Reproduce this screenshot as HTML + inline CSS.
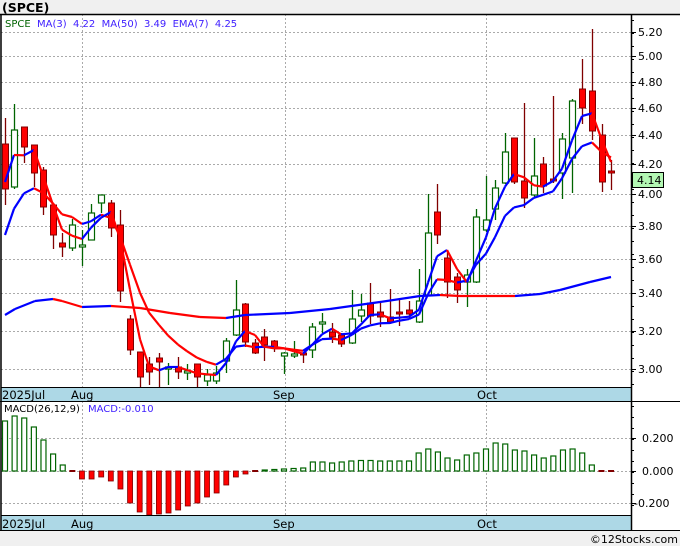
<!DOCTYPE html>
<html><head><meta charset="utf-8"><style>
html,body{margin:0;padding:0;background:#f0f0f0;}
body{width:680px;height:546px;overflow:hidden;position:relative;font-family:"DejaVu Sans","Liberation Sans",sans-serif;}
svg{position:absolute;left:0;top:0;}
</style></head><body>
<svg id="s" width="680" height="546" xmlns="http://www.w3.org/2000/svg" font-family="DejaVu Sans, Liberation Sans, sans-serif">
<rect x="0" y="0" width="680" height="546" fill="#f0f0f0"/>
<text x="2" y="12" font-size="12.5" font-weight="bold" fill="#000">(SPCE)</text>
<rect x="1" y="14" width="679" height="516" fill="#fff"/>
<g id="g"></g>
</svg>
<script>
var g=document.getElementById('g');var h='';
function L(x1,y1,x2,y2,c,w,d){h+='<line x1="'+x1+'" y1="'+y1+'" x2="'+x2+'" y2="'+y2+'" stroke="'+c+'" stroke-width="'+(w||1)+'"'+(d?' stroke-dasharray="'+d+'"':'')+'/>';}
function T(x,y,t,c,s,a){h+='<text x="'+x+'" y="'+y+'" font-size="'+(s||11)+'" fill="'+(c||'#000')+'"'+(a?' text-anchor="'+a+'"':'')+'>'+t+'</text>';}
// price grid
var pl=[[32,'5.20'],[56,'5.00'],[82,'4.80'],[108,'4.60'],[135,'4.40'],[164,'4.20'],[194,'4.00'],[226,'3.80'],[259,'3.60'],[293,'3.40'],[331,'3.20'],[369,'3.00']];
pl.forEach(function(p){L(1,p[0]+.5,631,p[0]+.5,'#aaa',1,'2,2');L(631,p[0]+.5,636,p[0]+.5,'#000');T(638,p[0]+4,p[1],'#000',11);});
for(var y=20;y<388;y+=13){L(631,y+.5,634,y+.5,'#000');}
[82,285,486].forEach(function(x){L(x+.5,14,x+.5,388,'#aaa',1,'2,2');L(x+.5,401,x+.5,515,'#aaa',1,'2,2');});
// macd grid
[[438,'0.200'],[471,'0.000'],[503,'-0.200']].forEach(function(p){L(1,p[0]+.5,631,p[0]+.5,'#aaa',1,'2,2');L(631,p[0]+.5,636,p[0]+.5,'#000');T(p[1][0]=='-'?634:642,p[0]+4,p[1],'#000',11);});
for(var y=406;y<515;y+=11){L(631,y+.5,634,y+.5,'#000');}
var C=[[5,118,205,144,189,'r'],[14,104,189,130,187,'g'],[24,127,163,127,147,'r'],[34,145,187,145,173,'r'],[43,167,215,170,207,'r'],[53,205,249,205,235,'r'],[62,233,257,243,247,'r'],[72,219,251,225,248,'g'],[82,230,266,245,247,'g'],[91,204,240,213,240,'g'],[101,195,213,195,203,'g'],[111,200,237,203,228,'r'],[120,210,302,225,291,'r'],[130,315,355,319,350,'r'],[140,352,387,352,377,'r'],[149,357,385,364,372,'r'],[159,353,387,358,362,'r'],[168,363,385,367,369,'g'],[178,357,379,367,372,'r'],[187,364,380,371,373,'g'],[197,364,387,364,377,'r'],[207,369,386,375,381,'g'],[216,366,384,373,381,'g'],[226,338,373,341,361,'g'],[236,280,336,310,335,'g'],[245,303,347,304,342,'r'],[255,339,354,343,353,'r'],[264,329,361,337,345,'r'],[274,340,352,341,347,'r'],[284,352,374,353,356,'g'],[294,341,358,354,356,'g'],[303,352,363,353,354,'r'],[312,323,358,327,350,'g'],[322,313,333,322,324,'g'],[332,323,343,332,337,'r'],[341,333,347,335,344,'r'],[352,290,344,319,343,'g'],[361,294,322,310,316,'g'],[370,283,324,303,316,'r'],[380,302,327,312,317,'r'],[390,289,324,317,322,'r'],[399,299,326,312,314,'r'],[409,301,318,310,314,'r'],[419,269,323,301,322,'g'],[428,194,296,233,295,'g'],[437,184,244,212,235,'r'],[447,250,298,258,282,'r'],[457,273,303,277,290,'r'],[467,269,307,275,282,'g'],[476,209,283,217,282,'g'],[486,176,232,220,230,'g'],[495,180,220,188,209,'g'],[505,133,184,152,183,'g'],[514,138,184,138,182,'r'],[524,103,208,181,198,'r'],[534,138,197,176,195,'g'],[543,157,193,164,186,'r'],[553,96,183,179,181,'r'],[562,133,199,139,173,'g'],[572,99,193,101,158,'g'],[582,59,124,89,108,'r'],[592,29,140,91,131,'r'],[602,124,192,135,182,'r'],[611,160,190,171,173,'r']];
C.forEach(function(c){var col=c[5]=='r'?'#800000':'#006400';L(c[0]+.5,c[1],c[0]+.5,c[2],col,1.3);
var hh=Math.max(2,c[4]-c[3]);
if(c[5]=='r')h+='<rect x="'+(c[0]-2.5)+'" y="'+c[3]+'" width="6" height="'+hh+'" fill="#ff0000" stroke="#800000" stroke-width="1"/>';
else h+='<rect x="'+(c[0]-2.5)+'" y="'+c[3]+'" width="6" height="'+hh+'" fill="#fff" stroke="#006400" stroke-width="1.2"/>';});
function line(pts){for(var i=1;i<pts.length;i++){var up=pts[i][1]<pts[i-1][1]-0.3;var c=up?'#0000ff':'#ff0000';if(Math.abs(pts[i][1]-pts[i-1][1])<=0.3)c=pts._c||'#ff0000';pts._c=c;L(pts[i-1][0],pts[i-1][1],pts[i][0],pts[i][1],c,2.2);}}
var cl=C.map(function(c){return c[5]=='r'?c[4]:c[3];});
var ma=[],em=[],e=235;
for(var i=0;i<C.length;i++){var m;if(i==0)m=182;else if(i==1)m=155;else m=(cl[i]+cl[i-1]+cl[i-2])/3;ma.push([C[i][0],m]);if(i>0)e=e+0.25*(cl[i]-e);em.push([C[i][0],e]);}
line(em);line(ma);
var m50=[[5,315],[15,309],[35,301],[53,299],[62,301],[82,307],[111,306],[140,308],[170,313],[200,317],[226,318],[245,315],[290,313],[330,309],[380,302],[420,296],[440,295],[460,296],[486,296],[515,296],[540,294],[560,290],[590,282],[611,277]];
line(m50);
// macd
var M=[421,416,418,427,440,454,465,472,479,479,477,481,489,503,512,515,514,513,510,506,503,497,493,485,477,474,472,470,469.5,469,468.5,468,462,462,463,462,461,460.5,460.5,461,461,461,461,453,449,452,458,460,455,453,449,443,444,450,451,455,458,456,450,449,453,465,472,473];
for(var i=0;i<C.length;i++){var x=5+i*9.62,v=M[i];
if(v<470.5)h+='<rect x="'+(x-2.5)+'" y="'+v+'" width="5" height="'+(471-v)+'" fill="#fff" stroke="#006400" stroke-width="1.2"/>';
else if(v>473)h+='<rect x="'+(x-2.5)+'" y="471" width="5" height="'+(v-471)+'" fill="#ff0000" stroke="#800000" stroke-width="0.8"/>';
else h+='<rect x="'+(x-3)+'" y="470" width="6" height="2" fill="#800000"/>';}
// bands
h+='<rect x="1" y="388" width="630" height="13" fill="#add8e6"/><rect x="1" y="515" width="630" height="15" fill="#add8e6"/>';
L(1,387.5,631,387.5,'#000');L(0,401.5,680,401.5,'#000');L(1,515.5,631,515.5,'#000');L(0,530.5,680,530.5,'#000');
L(631.5,14,631.5,530,'#000',1.5);L(1,14,1,530,'#000',1.5);L(0,14.5,680,14.5,'#000',1.5);
[[399],[528]].forEach(function(p){var y=p[0];T(2,y,'2025Jul','#000',11.5);T(71,y,'Aug','#000',11.5);T(273,y,'Sep','#000',11.5);T(477,y,'Oct','#000',11.5);});
T(5,27,'SPCE','#006400',10);h+='<text x="37" y="27" font-size="10" fill="#4020ff" xml:space="preserve">MA(3)  4.22  MA(50)  3.49  EMA(7)  4.25</text>';
T(4,412,'MACD(26,12,9)','#000',10);T(88,412,'MACD:-0.010','#4020ff',10);
h+='<rect x="632.5" y="172.5" width="31" height="15" fill="#b3f7b3" stroke="#000" stroke-width="1"/>';T(637,184,'4.14','#000',11);
T(678,543,'©12Stocks.com','#000',11,'end');
g.innerHTML=h;
</script>
</body></html>
